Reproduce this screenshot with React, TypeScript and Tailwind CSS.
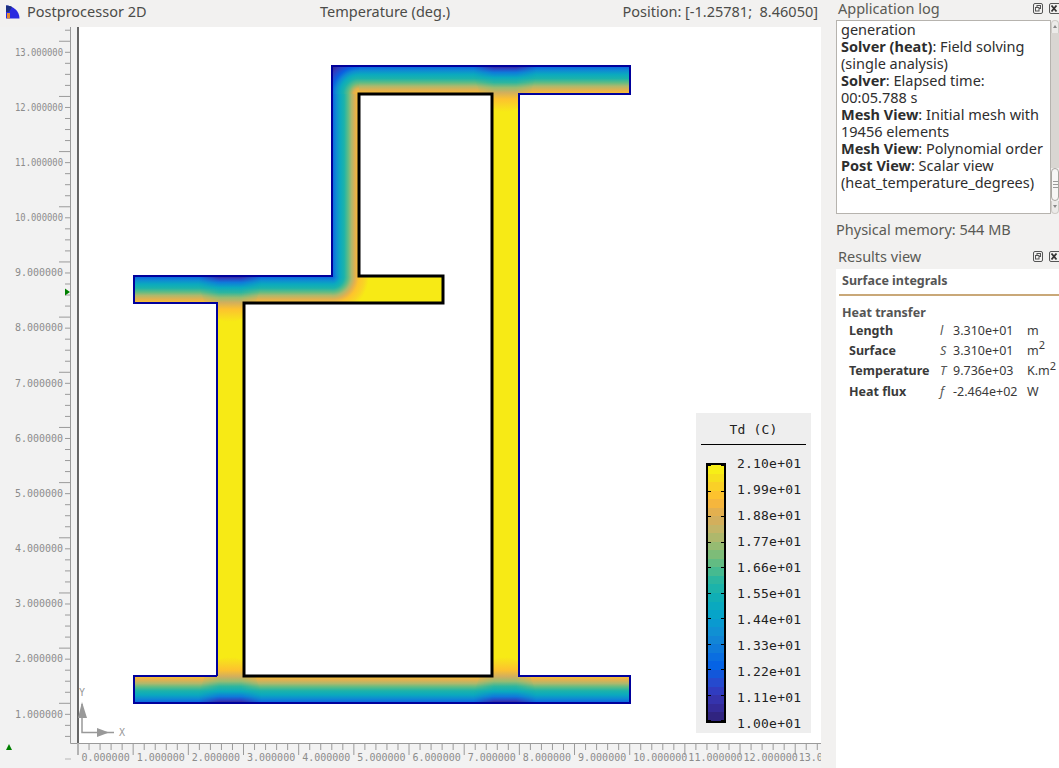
const BANDS = [
  'bg-[#f7ee17]', 'bg-[#f6df1e]', 'bg-[#fad027]', 'bg-[#fdc22e]', 'bg-[#f5b63d]', 'bg-[#e3b04f]',
  'bg-[#d3af5c]', 'bg-[#c3b567]', 'bg-[#aeb86c]', 'bg-[#96bb72]', 'bg-[#7dbc78]', 'bg-[#62bc83]',
  'bg-[#46ba90]', 'bg-[#2cb69f]', 'bg-[#1cb3aa]', 'bg-[#10aeb5]', 'bg-[#0aa9bf]', 'bg-[#06a4c9]',
  'bg-[#0a9ad0]', 'bg-[#1090d3]', 'bg-[#1285d6]', 'bg-[#0f7ada]', 'bg-[#0a6ee0]', 'bg-[#0563e5]',
  'bg-[#1257da]', 'bg-[#254ace]', 'bg-[#303cc0]', 'bg-[#3533ac]', 'bg-[#342b98]', 'bg-[#302480]',
];

const LEGEND_LABELS = [
  '2.10e+01', '1.99e+01', '1.88e+01', '1.77e+01', '1.66e+01', '1.55e+01',
  '1.44e+01', '1.33e+01', '1.22e+01', '1.11e+01', '1.00e+01',
];

const UNIT = 55.17;
const MINOR = UNIT / 5;

// wall (cold) to inner face
const WALL_STOPS: [number, string][] = [
  [0, '#0a5fe0'],
  [0.15, '#0f88d4'],
  [0.3, '#0aa9bf'],
  [0.45, '#1cb3aa'],
  [0.6, '#62bc83'],
  [0.72, '#aeb86c'],
  [0.86, '#e3b04f'],
  [1, '#fdc42c'],
];

// wall to web, where a web joins a flange the isotherms bulge into the web
const JUNCTION_STOPS: [number, string][] = [
  [0, '#302480'],
  [0.05, '#303cc0'],
  [0.14, '#0f7ada'],
  [0.25, '#0aa9bf'],
  [0.36, '#2cb69f'],
  [0.47, '#96bb72'],
  [0.58, '#d3af5c'],
  [0.72, '#fdc22e'],
  [0.85, '#f9d524'],
  [1, '#f7ea15'],
];

const Stops = ({ stops }: { stops: [number, string][] }) => (
  <>
    {stops.map(([o, c]) => (
      <stop key={o} offset={o} stopColor={c} />
    ))}
  </>
);

const Blob = ({ cx, cy, fill }: { cx: number; cy: number; fill: string }) => (
  <ellipse cx={cx} cy={cy} rx={31} ry={46} fill={fill} mask="url(#junctionFade)" />
);

const OUTLINE =
  'M134 276H332V66H630V94H519V676H630V703H134V676H217V303H134Z M359 94H492V676H244V303H443V276H359Z';

const PlotCanvas = () => {
  const yMinor = [];
  for (let i = 0; i * MINOR + 30 < 743; i++) {
    const y = 703.3 - 55.17 * 12 - MINOR * 1 + i * MINOR;
    yMinor.push({ y: y, long: i % 5 === 1 });
  }
  const xMinor = [];
  for (let i = 0; 78 + i * MINOR < 821; i++) {
    xMinor.push({ x: 78 + i * MINOR, long: i % 5 === 0 });
  }
  const yLabels = [13, 12, 11, 10, 9, 8, 7, 6, 5, 4, 3, 2, 1];
  const xLabels = [0, 1, 2, 3, 4, 5, 6, 7, 8, 9, 10, 11, 12, 13];

  return (
    <svg viewBox="0 27 821 741" className="block h-full w-full">
      <defs>
        <linearGradient id="flangeDown" x1="0" y1="0" x2="0" y2="1">
          <Stops stops={WALL_STOPS} />
        </linearGradient>
        <linearGradient id="flangeUp" x1="0" y1="1" x2="0" y2="0">
          <Stops stops={WALL_STOPS} />
        </linearGradient>
        <linearGradient id="webRight" x1="0" y1="0" x2="1" y2="0">
          <Stops stops={WALL_STOPS} />
        </linearGradient>
        <linearGradient id="junctionDown" x1="0" y1="0.5" x2="0" y2="1">
          <Stops stops={JUNCTION_STOPS} />
        </linearGradient>
        <linearGradient id="junctionUp" x1="0" y1="0.5" x2="0" y2="0">
          <Stops stops={JUNCTION_STOPS} />
        </linearGradient>
        <linearGradient id="fadeAcross" x1="0" y1="0" x2="1" y2="0">
          <stop offset="0" stopColor="#000" />
          <stop offset="0.32" stopColor="#fff" />
          <stop offset="0.68" stopColor="#fff" />
          <stop offset="1" stopColor="#000" />
        </linearGradient>
        <mask id="junctionFade" maskContentUnits="objectBoundingBox" x="0" y="0" width="1" height="1">
          <rect x="0" y="0" width="1" height="1" fill="url(#fadeAcross)" />
        </mask>
        <radialGradient id="outerCorner" gradientUnits="userSpaceOnUse" cx="359" cy="94" r="39">
          <stop offset="0" stopColor="#fdc42c" />
          <stop offset="0.14" stopColor="#e3b04f" />
          <stop offset="0.28" stopColor="#62bc83" />
          <stop offset="0.4" stopColor="#1cb3aa" />
          <stop offset="0.5" stopColor="#0aa9bf" />
          <stop offset="0.6" stopColor="#0f88d4" />
          <stop offset="0.7" stopColor="#0a5fe0" />
          <stop offset="0.85" stopColor="#303cc0" />
          <stop offset="1" stopColor="#302480" />
        </radialGradient>
        <radialGradient id="innerCorner" gradientUnits="userSpaceOnUse" cx="332" cy="276" r="37">
          <stop offset="0" stopColor="#0a5fe0" />
          <stop offset="0.12" stopColor="#0f88d4" />
          <stop offset="0.22" stopColor="#0aa9bf" />
          <stop offset="0.33" stopColor="#1cb3aa" />
          <stop offset="0.44" stopColor="#62bc83" />
          <stop offset="0.53" stopColor="#aeb86c" />
          <stop offset="0.63" stopColor="#e3b04f" />
          <stop offset="0.73" stopColor="#fdc42c" />
          <stop offset="0.88" stopColor="#f9d524" />
          <stop offset="1" stopColor="#f7ea15" />
        </radialGradient>
        <clipPath id="domain">
          <path d={OUTLINE} clipRule="evenodd" />
        </clipPath>
      </defs>

      <rect x="0" y="27" width="821" height="741" fill="#f2f2f2" />
      <rect x="79" y="27" width="742" height="716" fill="#ffffff" />

      {/* temperature field */}
      <g clipPath="url(#domain)">
        <path d={OUTLINE} fill="#f7ea15" fillRule="evenodd" />
        <rect x="134" y="676" width="496" height="27" fill="url(#flangeUp)" />
        <rect x="134" y="276" width="198" height="27" fill="url(#flangeDown)" />
        <rect x="359" y="66" width="271" height="28" fill="url(#flangeDown)" />
        <rect x="332" y="94" width="27" height="182" fill="url(#webRight)" />
        <rect x="332" y="66" width="27" height="28" fill="url(#outerCorner)" />
        <rect x="332" y="276" width="37" height="27" fill="url(#innerCorner)" />
        <Blob cx={230} cy={703} fill="url(#junctionUp)" />
        <Blob cx={505} cy={703} fill="url(#junctionUp)" />
        <Blob cx={230} cy={276} fill="url(#junctionDown)" />
        <Blob cx={505} cy={66} fill="url(#junctionDown)" />
      </g>

      {/* boundary edges */}
      <path
        d="M217 676H134V703H630V676H519V94H630V66H332V276H134V303H217V676"
        fill="none"
        stroke="#00009c"
        strokeWidth="2"
      />
      <path d="M359 94H492V676H244V303H443V276H359Z" fill="none" stroke="#000" strokeWidth="3" />

      {/* vertical ruler */}
      <path d="M70.5 27V743.5H821" fill="none" stroke="#9a9a9a" strokeWidth="1" />
      <rect x="77" y="27" width="2" height="716" fill="#666666" />
      <rect x="77" y="743" width="2" height="12" fill="#cccccc" />
      <rect x="65" y="758" width="6" height="2" fill="#d4d4d4" />
      {yMinor.map((t) => (
        <line key={t.y} x1={t.long ? 59 : 65} x2="70" y1={t.y} y2={t.y} stroke="#9a9a9a" />
      ))}
      {yLabels.map((v, i) => (
        <text
          key={v}
          x="15"
          y={52 + i * UNIT + 3.5}
          textLength={48}
          lengthAdjust="spacingAndGlyphs"
          className="fill-[#8c8c8c] font-['DejaVu_Sans_Mono'] text-[10px]"
        >
          {v}.000000
        </text>
      ))}

      {/* horizontal ruler */}
      {xMinor.map((t) => (
        <line key={t.x} x1={t.x} x2={t.x} y1="743" y2={t.long ? 755 : 750} stroke="#9a9a9a" />
      ))}
      {xLabels.map((v, i) => (
        <text
          key={v}
          x={78 + i * UNIT + 3.5}
          y="761"
          className="fill-[#8c8c8c] font-['DejaVu_Sans_Mono'] text-[10px]"
        >
          {v}.000000
        </text>
      ))}

      {/* axes gizmo */}
      <path d="M82 704V732.5H114" fill="none" stroke="#999999" strokeWidth="1.5" />
      <path d="M82 702L87 718H78Z M109 732.5L97 728V737Z" fill="#999999" />
      <text x="79" y="696" className="fill-[#999999] font-['DejaVu_Sans_Mono'] text-[10px]">
        Y
      </text>
      <text x="119" y="736" className="fill-[#999999] font-['DejaVu_Sans_Mono'] text-[10px]">
        X
      </text>

      {/* cursor markers */}
      <path d="M9 744L12 750H6Z" fill="#008000" />
      <path d="M70 292L65 288.5V295.5Z" fill="#008000" />
    </svg>
  );
};

const Legend = () => (
  <div className="absolute left-[696px] top-[386px] h-[320px] w-[115px] bg-[#eeeeee] font-['DejaVu_Sans_Mono'] text-[13px] text-[#222222]">
    <div className="mx-[5px] flex h-[32px] items-center justify-center border-b border-black pt-[2px] tracking-[0.2px]">
      Td (C)
    </div>
    <div className="ml-[10px] mt-[18px] flex">
      <div className="relative flex h-[260px] w-[20px] flex-col border-2 border-black">
        {BANDS.map((b) => (
          <div key={b} className={`flex-1 ${b}`} />
        ))}
        <div className="absolute inset-0 flex flex-col justify-between">
          {LEGEND_LABELS.map((l) => (
            <div key={l} className="flex h-px justify-between">
              <div className="w-[3px] bg-black" />
              <div className="w-[3px] bg-black" />
            </div>
          ))}
        </div>
      </div>
      <div className="-mt-[7px] ml-[11px] flex h-[276px] flex-col justify-between leading-[16px] tracking-[0.2px]">
        {LEGEND_LABELS.map((l) => (
          <span key={l}>{l}</span>
        ))}
      </div>
    </div>
  </div>
);

const DockButtons = () => (
  <div className="flex items-center gap-[6px]">
    <svg width="10" height="11" viewBox="0 0 10 11" fill="none" stroke="#555555">
      <rect x="0.5" y="0.5" width="9" height="10" rx="1.5" />
      <rect x="4" y="2.5" width="3.5" height="3" />
      <rect x="2.5" y="4.5" width="3.5" height="3.5" fill="#f2f1f0" />
    </svg>
    <svg width="10" height="11" viewBox="0 0 10 11" fill="none" stroke="#555555">
      <rect x="0.5" y="0.5" width="11" height="10" rx="1.5" />
      <path d="M2.5 2.5L7.5 8.5M7.5 2.5L2.5 8.5" stroke="#333333" strokeWidth="1.8" />
    </svg>
  </div>
);

const DockTitle = ({ title, height }: { title: string; height: string }) => (
  <div className={`flex items-center justify-between pl-[2px] text-[14.5px] leading-none text-[#5a5a55] ${height}`}>
    <span>{title}</span>
    <DockButtons />
  </div>
);

const LogScrollbar = () => (
  <div className="flex h-[194px] w-[8px] flex-col">
    <div className="flex h-[13px] justify-center rounded-t-[4px] border border-b-0 border-[#cfccc7] bg-[#ecebe9] pt-[4px]">
      <div className="h-0 w-0 border-x-[2px] border-b-[3px] border-x-transparent border-b-[#888888]" />
    </div>
    <div className="h-[135px] bg-[#d9d6d2]" />
    <div className="flex h-[33px] flex-col items-center justify-center gap-[2px] rounded-[4px] border border-[#a8a5a0] bg-[#f7f6f5]">
      <div className="h-px w-[5px] bg-[#999999]" />
      <div className="h-px w-[5px] bg-[#999999]" />
      <div className="h-px w-[5px] bg-[#999999]" />
    </div>
    <div className="flex flex-1 justify-center rounded-b-[4px] border border-t-0 border-[#cfccc7] bg-[#ecebe9] pt-[4px]">
      <div className="h-0 w-0 border-x-[2px] border-t-[3px] border-x-transparent border-t-[#888888]" />
    </div>
  </div>
);

const ResultRow = ({
  label,
  symbol,
  value,
  unit,
  sup,
  rowHeight,
}: {
  label: string;
  symbol: string;
  value: string;
  unit: string;
  sup?: boolean;
  rowHeight: string;
}) => (
  <div className={`flex items-center text-[12.5px] text-[#3a3a3a] ${rowHeight}`}>
    <span className="w-[91px] font-bold">{label}</span>
    <span className="w-[13px] italic text-[#555555]">{symbol}</span>
    <span className="w-[74px] whitespace-nowrap">{value}</span>
    <span className="whitespace-nowrap">
      {unit}
      {sup && <sup className="text-[11px] leading-none">2</sup>}
    </span>
  </div>
);

const App = () => (
  <div className="flex h-[768px] w-[1059px] overflow-hidden bg-[#f2f1f0] font-['Noto_Sans',sans-serif]">
    {/* Post view */}
    <div className="flex w-[821px] flex-col">
      <div className="flex h-[27px] flex-none items-center pb-[3px] pl-[6px] pr-[3px] text-[14.5px] text-[#4c4c48]">
        <div className="flex w-[314px] items-center gap-[7px]">
          <svg width="14" height="14" viewBox="0 0 14 14">
            <path d="M0 0.5C7 0.5 13.5 6 13.5 13.5H0Z" fill="#2a2ae0" />
            <path d="M0 0.5C2.5 0.5 4.5 1 6 2L3 7H0Z" fill="#1c2f80" />
            <path d="M1 8H4V13.5H1Z" fill="#e58a2c" />
          </svg>
          <span>Postprocessor 2D</span>
        </div>
        <span>Temperature (deg.)</span>
        <span className="ml-auto whitespace-pre">Position: [-1.25781;  8.46050]</span>
      </div>
      <div className="relative flex-1">
        <PlotCanvas />
        <Legend />
      </div>
    </div>

    {/* Docks */}
    <div className="flex flex-1 flex-col pl-[15px]">
      <DockTitle title="Application log" height="h-[20px] pb-[4px]" />
      <div className="flex">
        <div className="h-[194px] w-[215px] overflow-hidden border border-[#b6b3ae] bg-white px-[4px] text-[14.5px] leading-[17px] text-[#2e2e2e]">
          <p>generation</p>
          <p><b>Solver (heat)</b>: Field solving (single analysis)</p>
          <p><b>Solver</b>: Elapsed time: 00:05.788 s</p>
          <p><b>Mesh View</b>: Initial mesh with 19456 elements</p>
          <p><b>Mesh View</b>: Polynomial order</p>
          <p><b>Post View</b>: Scalar view (heat_temperature_degrees)</p>
        </div>
        <LogScrollbar />
      </div>
      <div className="flex h-[32px] items-center text-[14.5px] text-[#5a5a55]">Physical memory: 544 MB</div>
      <DockTitle title="Results view" height="h-[23px] pb-[2px]" />
      <div className="flex-1 bg-white pl-[3px]">
        <div className="flex h-[27px] items-center border-b-2 border-[#c9a878] pl-[3px] text-[12.5px] font-bold text-[#555555]">
          Surface integrals
        </div>
        <div className="pl-[3px] pt-[9px] text-[12.5px] font-bold leading-[16px] text-[#555555]">Heat transfer</div>
        <div className="mt-px pl-[10px]">
          <ResultRow label="Length" symbol="l" value="3.310e+01" unit="m" rowHeight="h-[19px]" />
          <ResultRow label="Surface" symbol="S" value="3.310e+01" unit="m" sup rowHeight="h-[20px]" />
          <ResultRow label="Temperature" symbol="T" value="9.736e+03" unit="K.m" sup rowHeight="h-[21px]" />
          <ResultRow label="Heat flux" symbol="f" value="-2.464e+02" unit="W" rowHeight="h-[20px]" />
        </div>
      </div>
    </div>
  </div>
);

export default App;
